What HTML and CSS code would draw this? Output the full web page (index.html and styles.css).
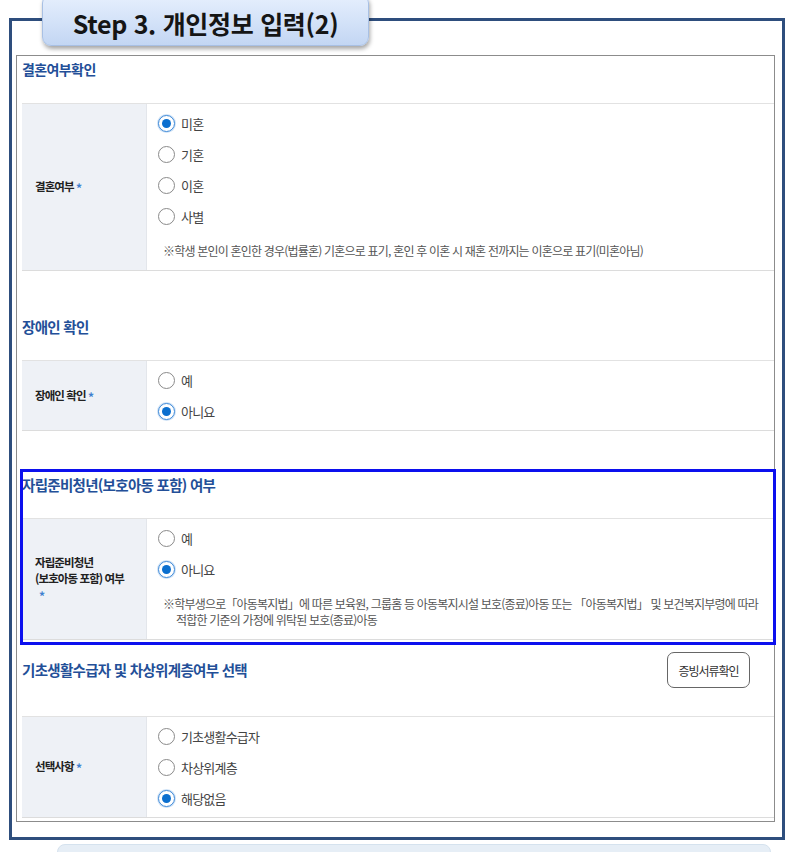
FILE: index.html
```html
<!DOCTYPE html>
<html lang="ko">
<head>
    <meta charset="UTF-8">
    <meta name="viewport" content="width=device-width, initial-scale=1.0">
    <title>Step 3. 개인정보 입력(2)</title>
    <link rel="stylesheet" href="styles.css">
</head>
<body>
    <div class="page">
        <div class="step-tab">Step 3. 개인정보 입력(2)</div>

        <div class="frame">
            <div class="box">

                <!-- 결혼여부 -->
                <div class="section first">
                    <div class="sec-head"><h2 class="small">결혼여부확인</h2></div>
                    <div class="row">
                        <div class="label"><span>결혼여부 <span class="req">*</span></span></div>
                        <div class="field">
                            <div class="opt"><span class="radio checked"></span>미혼</div>
                            <div class="opt"><span class="radio"></span>기혼</div>
                            <div class="opt"><span class="radio"></span>이혼</div>
                            <div class="opt"><span class="radio"></span>사별</div>
                            <p class="note">※학생 본인이 혼인한 경우(법률혼) 기혼으로 표기, 혼인 후 이혼 시 재혼 전까지는 이혼으로 표기(미혼아님)</p>
                        </div>
                    </div>
                </div>

                <!-- 장애인 -->
                <div class="section">
                    <div class="sec-head"><h2>장애인 확인</h2></div>
                    <div class="row">
                        <div class="label"><span>장애인 확인 <span class="req">*</span></span></div>
                        <div class="field">
                            <div class="opt"><span class="radio"></span>예</div>
                            <div class="opt"><span class="radio checked"></span>아니요</div>
                        </div>
                    </div>
                </div>

                <!-- 자립준비청년 -->
                <div class="section highlight">
                    <div class="sec-head"><h2>자립준비청년(보호아동 포함) 여부</h2></div>
                    <div class="row">
                        <div class="label"><span>자립준비청년<br>(보호아동 포함) 여부<br><span class="req solo">*</span></span></div>
                        <div class="field">
                            <div class="opt"><span class="radio"></span>예</div>
                            <div class="opt"><span class="radio checked"></span>아니요</div>
                            <p class="note">※학부생으로「아동복지법」에 따른 보육원, 그룹홈 등 아동복지시설 보호(종료)아동 또는 「아동복지법」 및 보건복지부령에 따라<br>적합한 기준의 가정에 위탁된 보호(종료)아동</p>
                        </div>
                    </div>
                </div>

                <!-- 기초생활수급자 -->
                <div class="section last">
                    <div class="sec-head with-btn">
                        <h2>기초생활수급자 및 차상위계층여부 선택</h2>
                        <button class="btn">증빙서류확인</button>
                    </div>
                    <div class="row">
                        <div class="label"><span>선택사항 <span class="req">*</span></span></div>
                        <div class="field">
                            <div class="opt"><span class="radio"></span>기초생활수급자</div>
                            <div class="opt"><span class="radio"></span>차상위계층</div>
                            <div class="opt"><span class="radio checked"></span>해당없음</div>
                        </div>
                    </div>
                </div>

            </div>
        </div>

        <div class="bottom-bar"></div>
    </div>
</body>
</html>
```

FILE: styles.css
```css
body {
    margin: 0;
    font-family: "Noto Sans CJK KR", "Noto Sans", sans-serif;
    color: #333;
    background: #fff;
    overflow: hidden;
}

.page {
    position: relative;
    margin-left: 9px;
    width: 776px;
    padding-top: 18px;
}

/* title tab sits over the frame's top edge */
.step-tab {
    position: absolute;
    left: 33px;
    top: -6px;
    width: 327px;
    height: 52px;
    box-sizing: border-box;
    padding-top: 6px;
    border: 1px solid #a8c0e4;
    border-radius: 9px;
    background: linear-gradient(to bottom, #e6effd 0%, #d3e2f8 55%, #c3d6f3 100%);
    box-shadow: 1px 3px 4px rgba(0, 0, 0, 0.35);
    text-align: center;
    line-height: 44px;
    font-size: 25px;
    font-weight: 700;
    color: #151515;
    letter-spacing: -0.3px;
}

.frame {
    border: 3px solid #2e4e7d;
    padding: 34px 7px 15px 4px;
}

.box {
    border: 1px solid #8c8c8c;
    padding: 0 0 3px 5px;
}

.section {
    margin-top: 42px;
}

.section.first {
    margin-top: 0;
}

.section.highlight {
    margin-top: 40px;
    outline: 3px solid #0c10ee;
    outline-offset: -1px;
    padding-bottom: 3px;
}

.section.last {
    margin-top: 8px;
}

.sec-head {
    display: flex;
    align-items: center;
    justify-content: space-between;
    height: 26px;
    margin-bottom: 21px;
}

.sec-head.with-btn {
    height: 36px;
    margin-bottom: 29px;
    padding-right: 24px;
}

h2 {
    margin: 0;
    font-size: 14.5px;
    font-weight: 700;
    letter-spacing: -0.7px;
    color: #234f98;
}

h2.small {
    font-size: 14px;
    letter-spacing: -0.6px;
}

.btn {
    height: 36px;
    width: 83px;
    border: 1px solid #666;
    border-radius: 7px;
    background: #fff;
    font-family: inherit;
    font-size: 12px;
    letter-spacing: -1px;
    color: #333;
    margin-top: 2px;
}

.row {
    display: grid;
    grid-template-columns: 125px 1fr;
    border-top: 1px solid #e2e2e2;
    border-bottom: 1px solid #dcdcdc;
}

.label {
    display: flex;
    align-items: center;
    background: #eef1f6;
    border-right: 1px solid #e3e6eb;
    padding-left: 13px;
    font-size: 11.5px;
    font-weight: 700;
    letter-spacing: -0.9px;
    line-height: 16px;
    color: #222;
}

.label .req {
    color: #3f7fcf;
    font-weight: 700;
    font-size: 12px;
    vertical-align: -2px;
}

.label .req.solo {
    padding-left: 4px;
}

.field {
    padding: 4px 10px 3px 11px;
}

.opt {
    display: flex;
    align-items: center;
    height: 31px;
    font-size: 13px;
    letter-spacing: -0.8px;
    color: #444;
}

.radio {
    position: relative;
    width: 15px;
    height: 15px;
    border: 1px solid #8a8a8a;
    border-radius: 50%;
    background: #fff;
    margin-right: 6px;
    flex-shrink: 0;
}

.radio.checked {
    border-color: #3f8ad8;
    box-shadow: 0 0 0 1px #cfe2f6;
}

.radio.checked::after {
    content: "";
    position: absolute;
    left: 3px;
    top: 3px;
    width: 9px;
    height: 9px;
    border-radius: 50%;
    background: #0b6fcf;
}

.note {
    margin: 11px 0 8px;
    padding-left: 18px;
    text-indent: -13px;
    font-size: 12px;
    line-height: 16px;
    letter-spacing: -0.8px;
    color: #555;
}

.bottom-bar {
    margin: 4px 0 0 48px;
    width: 712px;
    height: 20px;
    border: 1px solid #d5e2ee;
    border-radius: 8px;
    background: #e6eef6;
}
```
